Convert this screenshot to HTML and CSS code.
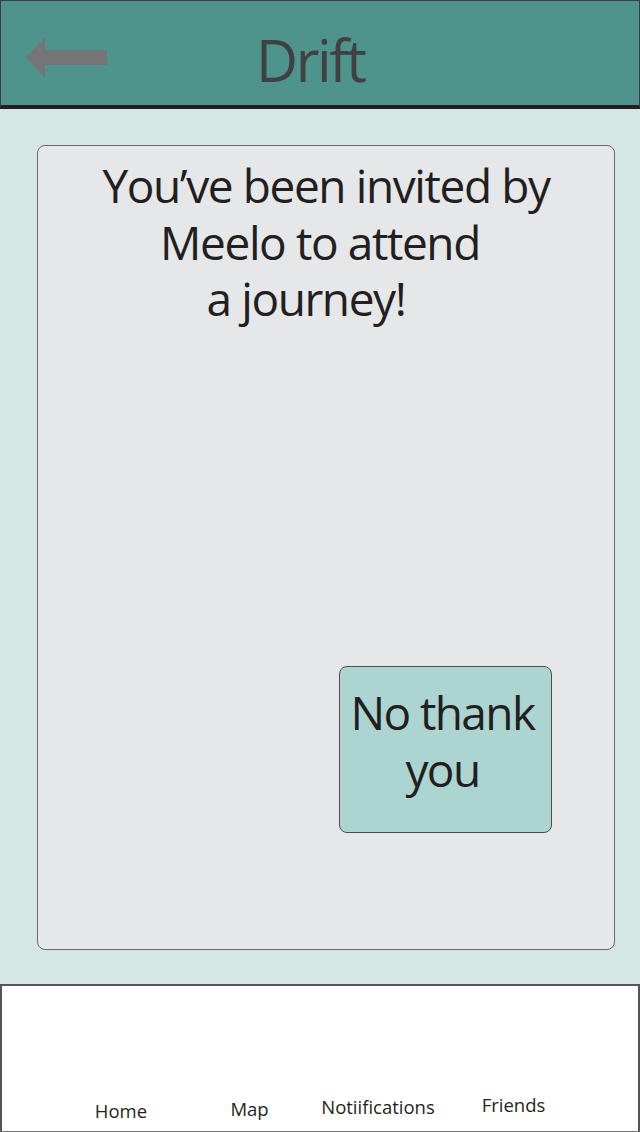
FILE: index.html
```html
<!DOCTYPE html>
<html lang="en">
<head>
<meta charset="utf-8">
<title>Drift</title>
<link rel="stylesheet" href="styles.css">
</head>
<body>
<div class="screen">
  <header class="topbar">
    <svg class="back" width="82" height="42" viewBox="0 0 82 42" aria-hidden="true">
      <polygon points="0,20.5 19,0 19,13.5 81,13.5 81,28 19,28 19,41" fill="#757575"/>
    </svg>
    <h1 class="title">Drift</h1>
  </header>
  <main class="content">
    <section class="card">
      <p class="invite">
        <span class="line l1">You’ve been invited by</span>
        <span class="line l2">Meelo to attend</span>
        <span class="line l3">a journey!</span>
      </p>
      <button class="decline">No thank<br>you</button>
    </section>
  </main>
  <nav class="tabbar">
    <span class="tab t1">Home</span>
    <span class="tab t2">Map</span>
    <span class="tab t3">Notiifications</span>
    <span class="tab t4">Friends</span>
  </nav>
</div>
</body>
</html>
```

FILE: styles.css
```css
* { box-sizing: border-box; }
html, body { margin: 0; padding: 0; }
body {
  width: 640px;
  height: 1132px;
  font-family: "Open Sans", "Noto Sans", sans-serif;
  background: #ffffff;
  overflow: hidden;
}
.screen {
  width: 640px;
  height: 1132px;
  display: flex;
  flex-direction: column;
}
.topbar {
  height: 109px;
  flex: none;
  background: #4e938c;
  border-top: 1px solid #3d3d3d;
  border-left: 1px solid #3d3d3d;
  border-right: 1px solid #3d3d3d;
  border-bottom: 4px solid #231f20;
  display: flex;
  align-items: flex-start;
  padding-left: 25px;
}
.back {
  margin-top: 36px;
  flex: none;
}
.title {
  margin: 30px 0 0 148px;
  font-weight: 400;
  font-size: 58px;
  line-height: 58px;
  color: #414042;
  letter-spacing: -2.4px;
}
.content {
  flex: none;
  height: 875px;
  background: #d4e7e5;
  padding: 36px 25px 34px 37px;
  display: flex;
}
.card {
  flex: 1;
  background: #e6e7e9;
  border: 1px solid #6a6a6a;
  border-radius: 8px;
  display: flex;
  flex-direction: column;
  padding-top: 11px;
}
.invite {
  margin: 0;
  text-align: center;
  font-size: 46px;
  line-height: 56.5px;
  color: #231f20;
  letter-spacing: -1.4px;
}
.line { display: block; }
.l2 { padding-right: 12px; }
.l3 { padding-right: 40px; }
.decline {
  margin: auto 62px 116px auto;
  width: 213px;
  height: 167px;
  background: #acd5d2;
  border: 1px solid #4d4d4d;
  border-radius: 8px;
  font-family: inherit;
  font-size: 46px;
  line-height: 57px;
  color: #231f20;
  letter-spacing: -1.6px;
  padding: 17px 6px 0 0;
  display: flex;
  flex-direction: column;
  align-items: center;
  justify-content: flex-start;
  text-align: center;
}
.tabbar {
  flex: 1;
  background: #ffffff;
  border-top: 2px solid #555555;
  border-left: 2px solid #555555;
  border-right: 2px solid #555555;
  border-bottom: 1px solid #777777;
  display: grid;
  grid-template-columns: 128px 129px 128px 143px;
  padding-left: 55px;
  align-items: end;
  justify-items: center;
  font-size: 18.5px;
  color: #231f20;
}
.tab { line-height: 22px; }
.t1 { margin-bottom: 9px; }
.t2 { margin-bottom: 11px; }
.t3 { margin-bottom: 13px; }
.t4 { margin-bottom: 15px; }
```
